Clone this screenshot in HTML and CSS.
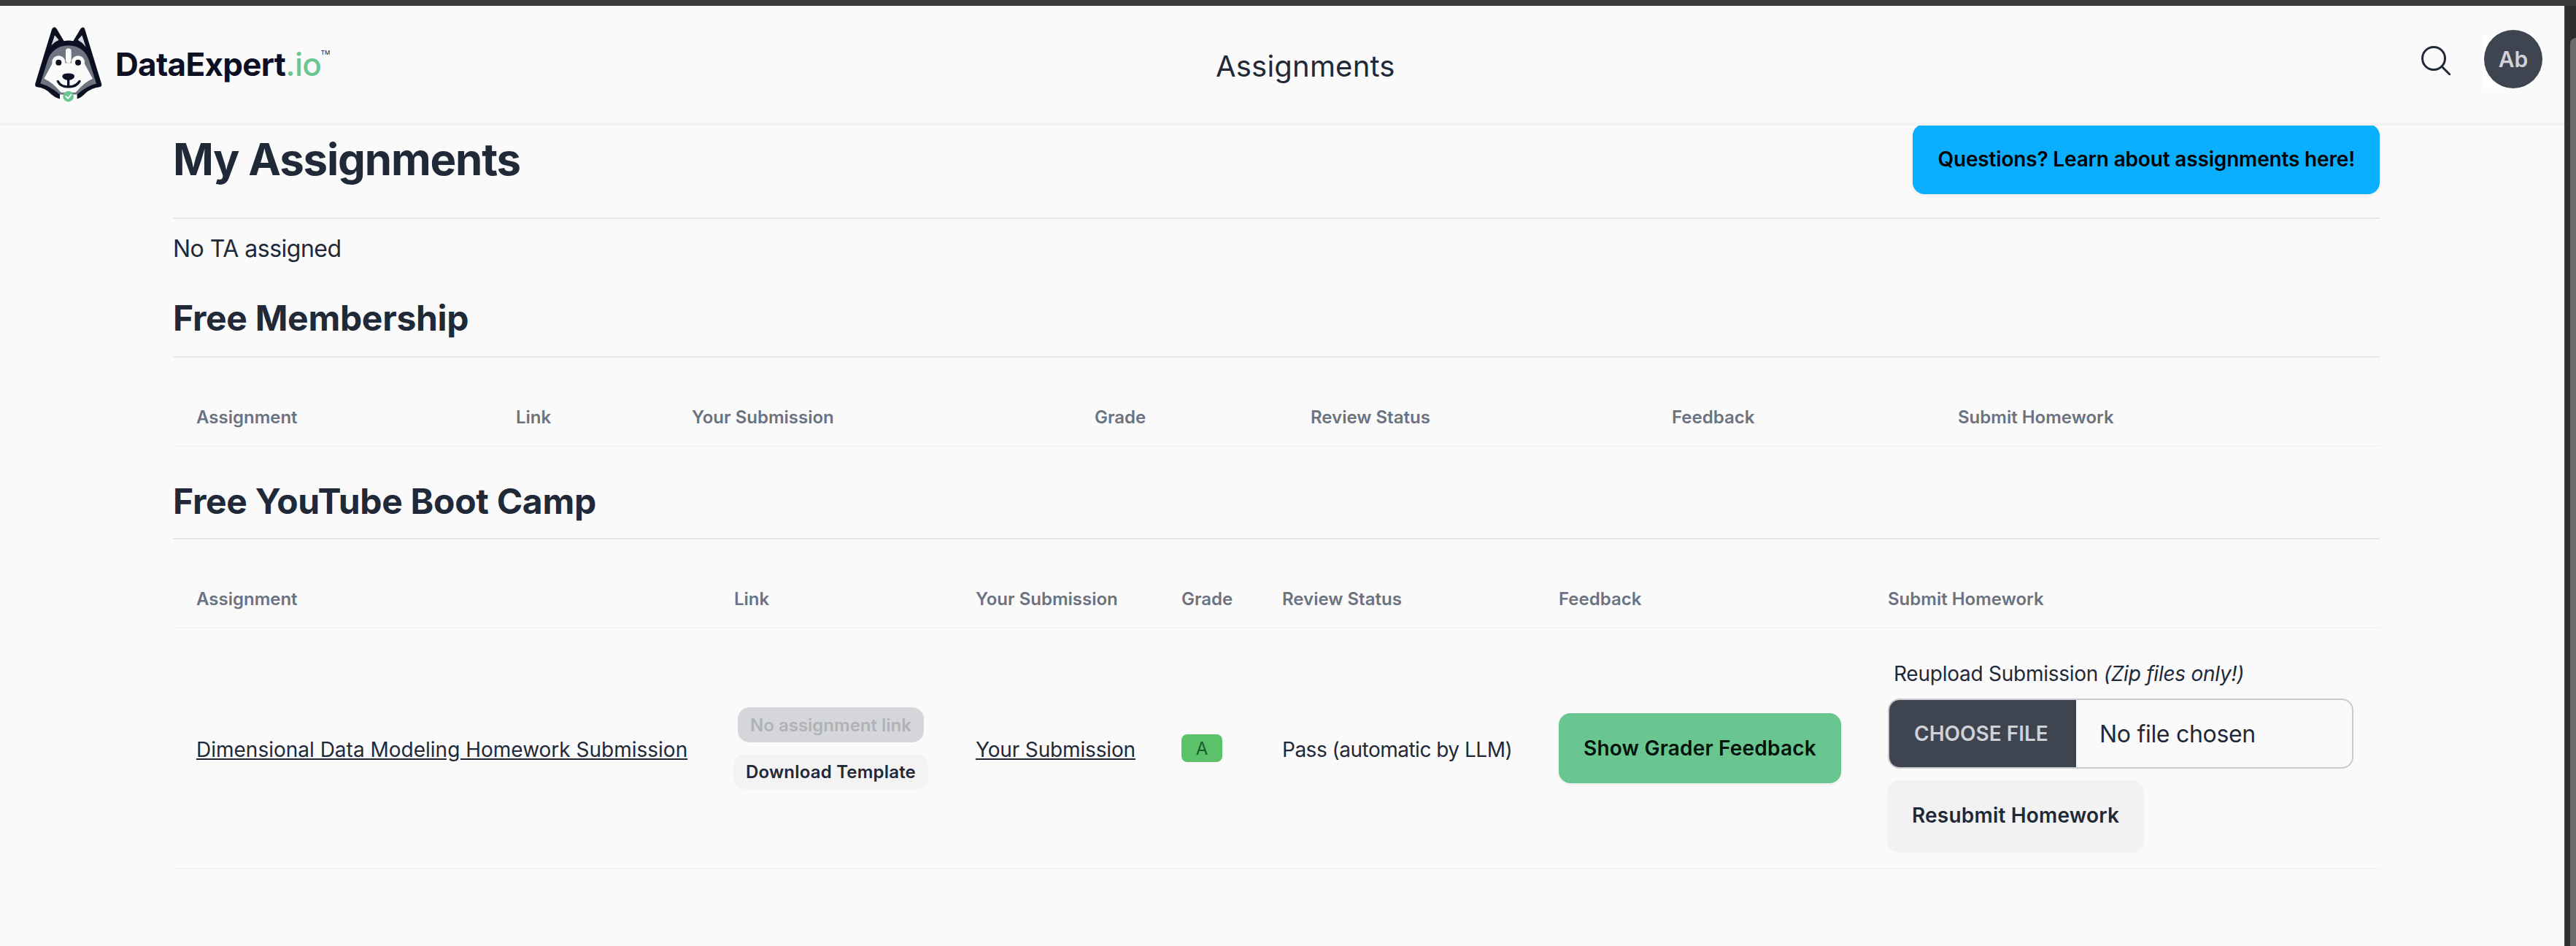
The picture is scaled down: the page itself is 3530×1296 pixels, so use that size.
FILE: index.html
```html
<!DOCTYPE html>
<html lang="en">

<head>
  <meta charset="UTF-8" />
  <title>Assignments | DataExpert.io</title>
  <link rel="stylesheet" href="styles.css">
</head>

<body>
  <div class="window-bar"></div>
  <div class="window">
    <div class="page">
      <nav class="navbar">
        <a class="brand" href="#">
          <svg class="brand-logo" viewBox="140 97 285 320">
            <path fill="#0c1022" d="M222 103Q228 103 232 110L262 160Q280 156 300 160L330 110Q335 103 342 104Q346 105 348 112L416 335Q420 348 408 349Q375 352 350 375Q335 392 316 398L316 372L245 372L245 398Q222 392 205 375Q185 352 152 349Q141 348 144 335L212 112Q215 104 222 103Z" />
            <path fill="#d8dade" d="M224 136L210 178Q225 163 241 156Z" />
            <path fill="#d8dade" d="M336 136L352 184Q337 166 319 156Z" />
            <path fill="#6f7580" d="M280 178C235 178 205 205 195 240L165 335Q205 345 245 380L316 380Q355 345 395 335L365 240C355 205 325 178 280 178Z" />
            <g fill="#fafafa">
              <rect x="269" y="190" width="23" height="60" rx="11" />
              <circle cx="240" cy="247" r="27" />
              <circle cx="320" cy="247" r="27" />
              <path d="M215 250L180 315Q215 330 250 372L310 372Q345 330 380 315L345 250Z" />
            </g>
            <circle cx="240" cy="249" r="12" fill="#0c1022" />
            <circle cx="320" cy="249" r="12" fill="#0c1022" />
            <path fill="#0c1022" d="M255 305Q255 293 280 293Q305 293 305 305Q305 318 280 322Q255 318 255 305Z" />
            <path fill="none" stroke="#0c1022" stroke-width="10" stroke-linecap="round" d="M237 326Q250 350 280 348Q310 350 326 326M280 310V345" />
            <circle cx="280" cy="388" r="22" fill="#69c690" />
            <path fill="none" stroke="#fafafa" stroke-width="6" stroke-linecap="round" stroke-linejoin="round" d="M270 388L278 396L291 381" />
          </svg>
          <span class="brand-name">DataExpert<span class="brand-io">.io</span><span class="brand-tm">TM</span></span>
        </a>
        <div class="nav-title">Assignments</div>
        <div class="nav-actions">
          <svg class="search-icon" viewBox="0 0 40 40">
            <circle cx="17" cy="17" r="15.5" />
            <path d="M28 28L39 39" />
          </svg>
          <div class="avatar">Ab</div>
        </div>
      </nav>

      <main class="content">
        <div class="page-head">
          <h1>My Assignments</h1>
          <a class="btn btn-blue" href="#">Questions? Learn about assignments here!</a>
        </div>
        <p class="ta-note">No TA assigned</p>

        <h2>Free Membership</h2>
        <table class="table-free">
          <thead>
            <tr>
              <th class="col-a">Assignment</th>
              <th class="col-b">Link</th>
              <th class="col-c">Your Submission</th>
              <th class="col-d">Grade</th>
              <th class="col-e">Review Status</th>
              <th class="col-f">Feedback</th>
              <th class="col-g">Submit Homework</th>
            </tr>
          </thead>
        </table>

        <h2>Free YouTube Boot Camp</h2>
        <table class="table-camp">
          <thead>
            <tr>
              <th class="col-a">Assignment</th>
              <th class="col-b">Link</th>
              <th class="col-c">Your Submission</th>
              <th class="col-d">Grade</th>
              <th class="col-e">Review Status</th>
              <th class="col-f">Feedback</th>
              <th class="col-g">Submit Homework</th>
            </tr>
          </thead>
          <tbody>
            <tr>
              <td class="text-cell"><a href="#">Dimensional Data Modeling Homework Submission</a></td>
              <td>
                <div class="link-stack">
                  <span class="chip chip-off">No assignment link</span>
                  <a class="chip chip-on" href="#">Download Template</a>
                </div>
              </td>
              <td class="text-cell"><a class="own-link" href="#">Your Submission</a></td>
              <td><span class="grade">A</span></td>
              <td class="text-cell status">Pass (automatic by LLM)</td>
              <td><a class="btn btn-green" href="#">Show Grader Feedback</a></td>
              <td class="submit-cell">
                <div class="upload-label">Reupload Submission <em>(Zip files only!)</em></div>
                <div class="file-input">
                  <span class="file-btn">Choose File</span>
                  <span class="file-name">No file chosen</span>
                </div>
                <a class="btn btn-gray" href="#">Resubmit Homework</a>
              </td>
            </tr>
          </tbody>
        </table>
      </main>
    </div>
    <div class="scrollbar"><div class="scroll-thumb"></div></div>
  </div>
</body>

</html>
```

FILE: styles.css
```css
* {
  box-sizing: border-box;
}

html, body {
  margin: 0;
  height: 100%;
  overflow: hidden;
}

body {
  display: flex;
  flex-direction: column;
  font-family: Inter, "Liberation Sans", sans-serif;
  font-size: 28px;
  color: #1f2937;
  background-color: #fafafa;
}

a {
  color: inherit;
}

.window-bar {
  height: 8px;
  flex: none;
  background-color: #3c3c3c;
}

.window {
  flex: 1;
  display: flex;
  min-height: 0;
}

.page {
  flex: 1;
  min-width: 0;
}

.scrollbar {
  width: 16px;
  flex: none;
  padding: 44px 0 0 6px;
  background-color: #2e2e2e;
  border-left: 2px solid #3a3a3a;
}

.scroll-thumb {
  height: 100%;
  background-color: #6b6b6b;
  border-radius: 8px 0 0 0;
}

/* top nav */
.navbar {
  position: relative;
  z-index: 2;
  height: 164px;
  display: flex;
  align-items: center;
  justify-content: space-between;
  padding: 0 30px 0 47px;
  background-color: #fafafa;
  border-bottom: 4px solid #f2f2f2;
}

.brand {
  display: flex;
  align-items: center;
  gap: 16px;
  color: #0c1022;
  text-decoration: none;
}

.brand-logo {
  width: 95px;
  height: 107px;
}

.brand-name {
  position: relative;
  font-size: 44px;
  font-weight: 700;
  letter-spacing: -0.7px;
}

.brand-io {
  color: #69c690;
  font-weight: 500;
}

.brand-tm {
  position: absolute;
  top: 6px;
  right: -12px;
  font-size: 8px;
  font-weight: 400;
  letter-spacing: 0;
}

.nav-title {
  position: absolute;
  left: 1666px;
  top: 58px;
  font-size: 40px;
  line-height: 50px;
  letter-spacing: 0.2px;
}

.nav-actions {
  display: flex;
  align-items: flex-start;
  gap: 46px;
  height: 80px;
  margin-top: -14px;
}

.search-icon {
  width: 40px;
  height: 40px;
  margin-top: 22px;
  fill: none;
  stroke: #1f2937;
  stroke-width: 3px;
  stroke-linecap: round;
}

.avatar {
  position: relative;
  width: 80px;
  height: 80px;
  display: flex;
  align-items: center;
  justify-content: center;
  border-radius: 50%;
  background-color: #3f4451;
  color: #d0d2d8;
  font-size: 30px;
  font-weight: 600;
}

.avatar::before {
  content: "";
  position: absolute;
  z-index: -1;
  left: -2px;
  top: 8px;
  width: 24px;
  height: 72px;
  background-color: #fff;
}

/* main column */
.content {
  width: 3024px;
  margin-left: 237px;
}

.page-head {
  display: flex;
  align-items: center;
  justify-content: space-between;
  margin-top: -2px;
  height: 130px;
  padding-bottom: 32px;
  border-bottom: 2px solid #e5e7eb;
}

h1 {
  margin: 0;
  font-size: 60px;
  line-height: 72px;
  font-weight: 700;
  letter-spacing: -1.2px;
}

h2 {
  margin: 41px 0 0;
  padding-bottom: 22px;
  font-size: 48px;
  line-height: 60px;
  font-weight: 700;
  letter-spacing: -0.3px;
  border-bottom: 2px solid #e5e7eb;
}

.ta-note {
  margin: 17px 0 0;
  font-size: 32px;
  line-height: 48px;
  letter-spacing: -0.5px;
}

.btn {
  display: inline-flex;
  align-items: center;
  height: 96px;
  padding: 0 34px;
  border-radius: 16px;
  font-size: 28px;
  font-weight: 600;
  text-decoration: none;
  box-shadow: 0 2px 4px rgba(0, 0, 0, 0.06);
}

.btn-blue {
  color: #000;
  letter-spacing: -0.17px;
  background-color: #0ab0ff;
}

.btn-green {
  color: #04130b;
  letter-spacing: 0.2px;
  background-color: #69c690;
}

.btn-gray {
  background-color: #f2f2f2;
  margin-top: 16px;
  padding: 0 33px;
  letter-spacing: 0.2px;
}

/* tables */
table {
  width: 100%;
  margin-top: 42px;
  border-collapse: collapse;
  table-layout: fixed;
}

.table-free .col-a { width: 438px; }
.table-free .col-b { width: 241px; }
.table-free .col-c { width: 552px; }
.table-free .col-d { width: 296px; }
.table-free .col-e { width: 495px; }
.table-free .col-f { width: 392px; }

.table-camp .col-a { width: 737px; }
.table-camp .col-b { width: 331px; }
.table-camp .col-c { width: 282px; }
.table-camp .col-d { width: 138px; }
.table-camp .col-e { width: 379px; }
.table-camp .col-f { width: 451px; }

th {
  height: 79px;
  padding: 0 32px;
  text-align: left;
  font-size: 24px;
  font-weight: 600;
  color: #6b7280;
  border-bottom: 2px solid #f3f3f3;
}

td {
  padding: 0 32px;
  vertical-align: middle;
  white-space: nowrap;
  border-bottom: 2px solid #f3f3f3;
}

.text-cell {
  padding-top: 4px;
}

.table-free + h2 {
  margin-top: 45px;
  padding-bottom: 20px;
}

.own-link {
  letter-spacing: -0.15px;
}

.status {
  letter-spacing: -0.5px;
}

.link-stack {
  display: flex;
  flex-direction: column;
  align-items: center;
  gap: 16px;
  width: 265px;
}

.chip {
  display: inline-flex;
  align-items: center;
  height: 48px;
  padding: 0 17px;
  border-radius: 16px;
  font-size: 24px;
  font-weight: 600;
  text-decoration: none;
  background-color: #f3f3f3;
}

.chip-on {
  letter-spacing: 0.2px;
}

.chip-off {
  color: #b0b2b6;
  background-color: #d5d6d9;
}

.grade {
  display: inline-flex;
  align-items: center;
  justify-content: center;
  width: 56px;
  height: 38px;
  border-radius: 8px;
  font-size: 24px;
  color: #1f5a2c;
  background-color: #5cc269;
}

.submit-cell {
  padding: 41px 32px 24px;
}

.upload-label {
  padding-left: 8px;
  line-height: 42px;
  margin-bottom: 13px;
  letter-spacing: -0.25px;
}

.file-input {
  display: flex;
  align-items: center;
  width: 638px;
  height: 96px;
  border: 2px solid #c9cacf;
  border-radius: 16px;
  overflow: hidden;
}

.file-btn {
  display: flex;
  align-items: center;
  width: 256px;
  height: 100%;
  padding-left: 34px;
  font-weight: 600;
  text-transform: uppercase;
  color: #d0d2d8;
  background-color: #3f4451;
}

.file-name {
  margin-left: 32px;
  font-size: 32px;
  letter-spacing: -0.3px;
}
```
